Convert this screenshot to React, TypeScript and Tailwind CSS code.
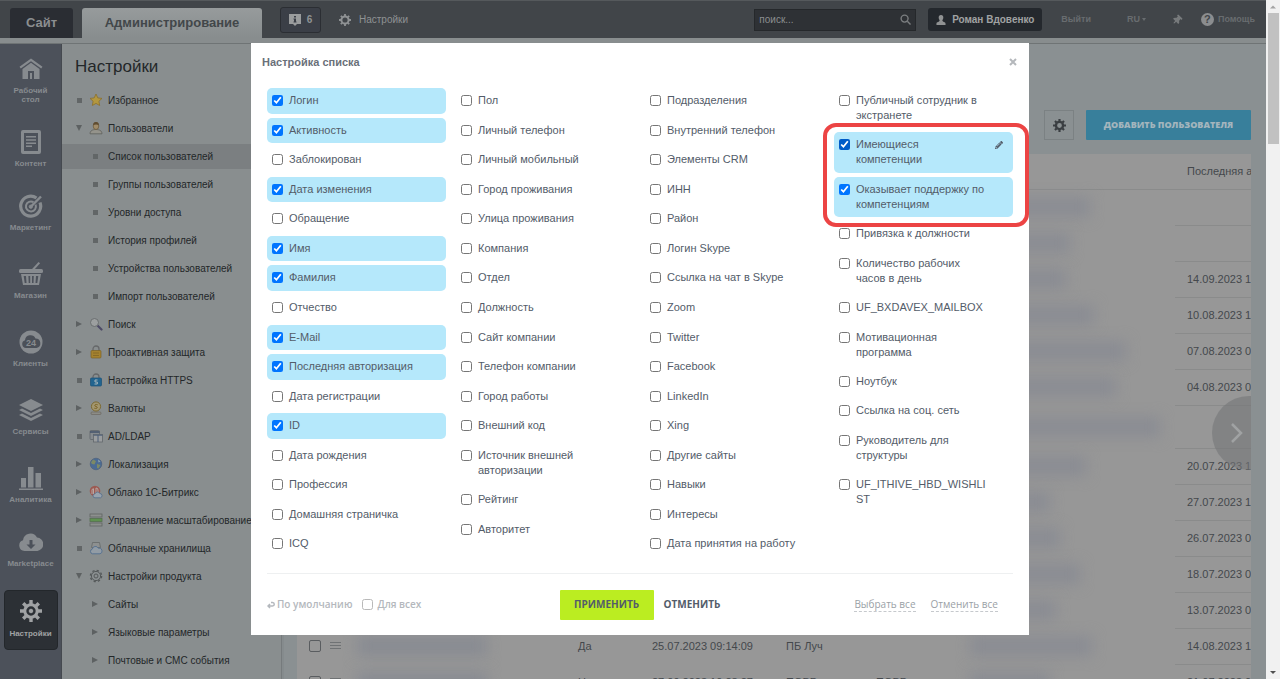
import React, { useState } from "react";
import { FaCog, FaPencilAlt, FaThumbtack } from "react-icons/fa";

type Field = {
  label: string;
  checked?: boolean;
  lines?: 2;
  hovered?: boolean;
};

type MenuItem = {
  label: string;
  marker: "dot" | "open" | "closed";
  icon?: React.ReactNode;
  sub?: boolean;
  active?: boolean;
};

type UserRow = {
  date: string;
  smudge: string;
  tall?: boolean;
  active?: string;
  changed?: string;
  company?: string;
  department?: string;
};

const fieldColumns: Field[][] = [
  [
    { label: "Логин", checked: true },
    { label: "Активность", checked: true },
    { label: "Заблокирован" },
    { label: "Дата изменения", checked: true },
    { label: "Обращение" },
    { label: "Имя", checked: true },
    { label: "Фамилия", checked: true },
    { label: "Отчество" },
    { label: "E-Mail", checked: true },
    { label: "Последняя авторизация", checked: true },
    { label: "Дата регистрации" },
    { label: "ID", checked: true },
    { label: "Дата рождения" },
    { label: "Профессия" },
    { label: "Домашняя страничка" },
    { label: "ICQ" },
  ],
  [
    { label: "Пол" },
    { label: "Личный телефон" },
    { label: "Личный мобильный" },
    { label: "Город проживания" },
    { label: "Улица проживания" },
    { label: "Компания" },
    { label: "Отдел" },
    { label: "Должность" },
    { label: "Сайт компании" },
    { label: "Телефон компании" },
    { label: "Город работы" },
    { label: "Внешний код" },
    { label: "Источник внешней авторизации", lines: 2 },
    { label: "Рейтинг" },
    { label: "Авторитет" },
  ],
  [
    { label: "Подразделения" },
    { label: "Внутренний телефон" },
    { label: "Элементы CRM" },
    { label: "ИНН" },
    { label: "Район" },
    { label: "Логин Skype" },
    { label: "Ссылка на чат в Skype" },
    { label: "Zoom" },
    { label: "Twitter" },
    { label: "Facebook" },
    { label: "LinkedIn" },
    { label: "Xing" },
    { label: "Другие сайты" },
    { label: "Навыки" },
    { label: "Интересы" },
    { label: "Дата принятия на работу" },
  ],
  [
    { label: "Публичный сотрудник в экстранете", lines: 2 },
    { label: "Имеющиеся компетенции", lines: 2, checked: true, hovered: true },
    { label: "Оказывает поддержку по компетенциям", lines: 2, checked: true },
    { label: "Привязка к должности" },
    { label: "Количество рабочих часов в день", lines: 2 },
    { label: "UF_BXDAVEX_MAILBOX" },
    { label: "Мотивационная программа", lines: 2 },
    { label: "Ноутбук" },
    { label: "Ссылка на соц. сеть" },
    { label: "Руководитель для структуры", lines: 2 },
    { label: "UF_ITHIVE_HBD_WISHLIST", lines: 2 },
  ],
];

const StarIcon = () => (
  <svg viewBox="0 0 14 14" className="size-[14px]">
    <path d="M7 1l1.8 3.9 4.2.5-3.1 2.900.8 4.200L7 10.400l-3.700 2.100.8-4.200L1 5.400l4.200-.5z" fill="#b3973f" stroke="#8a6f2c" strokeWidth=".8" />
  </svg>
);

const PersonIcon = () => (
  <svg viewBox="0 0 14 14" className="size-[14px]">
    <path d="M1 12.800c0-3 2.500-4.300 6-4.300s6 1.300 6 4.300z" fill="#94938b" stroke="#5e5f5c" strokeWidth=".8" />
    <ellipse cx="7" cy="5" rx="2.800" ry="3.500" fill="#a18c69" stroke="#6d5a3c" strokeWidth=".8" />
    <path d="M4.200 4.300a2.800 3.300 0 0 1 5.600 0c-1.500-1-4-1-5.600 0z" fill="#5f4c31" />
  </svg>
);

const LoupeIcon = () => (
  <svg viewBox="0 0 14 14" className="size-[14px]">
    <path d="M8.500 8.500l4 4" stroke="#4d4a66" strokeWidth="2.200" strokeLinecap="round" />
    <circle cx="5.500" cy="5.500" r="4" fill="#9c9fa0" stroke="#6b6f70" />
  </svg>
);

const LockIcon = () => (
  <svg viewBox="0 0 14 14" className="size-[14px]">
    <path d="M4 6V4a3 3 0 0 1 6 0v2" fill="none" stroke="#66686a" strokeWidth="1.300" />
    <rect x="2" y="5.500" width="10" height="7.500" rx="1" fill="#a5822f" stroke="#7d6225" strokeWidth=".7" />
    <path d="M4 8h6M4 10.500h6" stroke="#806427" strokeWidth=".8" />
  </svg>
);

const HttpsIcon = () => (
  <svg viewBox="0 0 14 14" className="size-[14px]">
    <path d="M4 6V4a3 3 0 0 1 6 0v2" fill="none" stroke="#66686a" strokeWidth="1.300" />
    <rect x="1.500" y="5" width="11" height="8" rx="1" fill="#22648f" stroke="#1a5279" strokeWidth=".7" />
    <path d="M8.500 7H6v2h2.300v2H5.500" fill="none" stroke="#a7b6bd" />
  </svg>
);

const CoinIcon = () => (
  <svg viewBox="0 0 14 14" className="size-[14px]">
    <rect x="2" y="11" width="10" height="2.500" rx="1" fill="#8c8c86" stroke="#66625a" strokeWidth=".6" />
    <circle cx="7" cy="5.500" r="4.600" fill="#a39770" stroke="#7d6a32" />
    <path d="M8.700 3.800c-3-1.200-4 1.200-1.700 1.700s1.300 2.800-1.700 1.700" fill="none" stroke="#7d6324" />
  </svg>
);

const LdapIcon = () => (
  <svg viewBox="0 0 14 14" className="size-[14px]">
    <rect x="1" y="1.500" width="9.500" height="9" rx="1" fill="#868b8f" stroke="#5f656b" strokeWidth=".8" />
    <path d="M1 3h9.500" stroke="#46566c" strokeWidth="1.600" />
    <rect x="4.500" y="5.500" width="9" height="7.500" fill="#9a9d9f" stroke="#63686c" strokeWidth=".8" />
    <path d="M4.500 6.200h9M9 6v7" stroke="#4c5e78" />
  </svg>
);

const GlobeIcon = () => (
  <svg viewBox="0 0 14 14" className="size-[14px]">
    <circle cx="7" cy="7" r="5.800" fill="#4b6b93" stroke="#465a78" strokeWidth=".6" />
    <path d="M4 2.500l3 1.500-1.500 3.500L3 7l-1-1.500zM8 7l3.500 1-2 3.500L8 11z" fill="#7d8a65" />
    <path d="M9 2.500l2.500 2-2 1z" fill="#8ea0ad" />
  </svg>
);

const BitrixCloudIcon = () => (
  <svg viewBox="0 0 14 14" className="size-[14px]">
    <circle cx="6" cy="6" r="5.300" fill="#9c5a52" />
    <path d="M3 9V4.500l1.500-.8V9M7 8V3a2 2 0 0 1 2 2v3" fill="none" stroke="#b8a7a4" />
    <path d="M6 12.800a2 2 0 0 1 0-4 2.600 2.600 0 0 1 4.800-.3 2.200 2.200 0 0 1 .7 4.300z" fill="#98a3ae" stroke="#566f8b" strokeWidth=".8" />
  </svg>
);

const ServersIcon = () => (
  <svg viewBox="0 0 14 14" className="size-[14px]">
    <rect x="1" y="1" width="12" height="3" fill="#8d908e" stroke="#606462" strokeWidth=".8" />
    <rect x="1" y="5.500" width="12" height="3" fill="#5f9150" stroke="#55704e" strokeWidth=".8" />
    <rect x="1" y="10" width="12" height="3" fill="#8d908e" stroke="#606462" strokeWidth=".8" />
  </svg>
);

const StorageIcon = () => (
  <svg viewBox="0 0 14 14" className="size-[14px]">
    <path d="M3.500 1.500h7l1 5h-9z" fill="#8d9090" stroke="#646868" strokeWidth=".8" />
    <path d="M3.500 12.800a2.400 2.400 0 0 1-.2-4.700 3.200 3.200 0 0 1 6-.9 2.900 2.900 0 0 1 1.700 5.600z" fill="#929ca5" stroke="#546f90" strokeWidth=".9" />
  </svg>
);

const GearLineIcon = () => (
  <svg viewBox="0 0 14 14" className="size-[14px]" fill="none" stroke="#55595a">
    <circle cx="7" cy="7" r="5.600" strokeWidth="1.400" strokeDasharray="2.200 2.200" />
    <circle cx="7" cy="7" r="4.600" />
    <circle cx="7" cy="7" r="2" />
  </svg>
);

const menu: MenuItem[] = [
  { label: "Избранное", marker: "dot", icon: <StarIcon /> },
  { label: "Пользователи", marker: "open", icon: <PersonIcon /> },
  { label: "Список пользователей", marker: "dot", sub: true, active: true },
  { label: "Группы пользователей", marker: "dot", sub: true },
  { label: "Уровни доступа", marker: "dot", sub: true },
  { label: "История профилей", marker: "dot", sub: true },
  { label: "Устройства пользователей", marker: "dot", sub: true },
  { label: "Импорт пользователей", marker: "dot", sub: true },
  { label: "Поиск", marker: "closed", icon: <LoupeIcon /> },
  { label: "Проактивная защита", marker: "closed", icon: <LockIcon /> },
  { label: "Настройка HTTPS", marker: "dot", icon: <HttpsIcon /> },
  { label: "Валюты", marker: "closed", icon: <CoinIcon /> },
  { label: "AD/LDAP", marker: "dot", icon: <LdapIcon /> },
  { label: "Локализация", marker: "closed", icon: <GlobeIcon /> },
  { label: "Облако 1С-Битрикс", marker: "closed", icon: <BitrixCloudIcon /> },
  { label: "Управление масштабирование", marker: "closed", icon: <ServersIcon /> },
  { label: "Облачные хранилища", marker: "dot", icon: <StorageIcon /> },
  { label: "Настройки продукта", marker: "open", icon: <GearLineIcon /> },
  { label: "Сайты", marker: "closed", sub: true },
  { label: "Языковые параметры", marker: "closed", sub: true },
  { label: "Почтовые и СМС события", marker: "closed", sub: true },
];

const rows: UserRow[] = [
  { date: "", smudge: "w-[120px]" },
  { date: "", smudge: "w-[100px]" },
  { date: "14.09.2023 1", smudge: "w-[96px]" },
  { date: "10.08.2023 1", smudge: "w-[124px]" },
  { date: "07.08.2023 0", smudge: "w-[156px]" },
  { date: "04.08.2023 0", smudge: "w-[146px]" },
  { date: "", smudge: "w-[190px]", tall: true },
  { date: "20.07.2023 1", smudge: "w-[116px]" },
  { date: "27.07.2023 1", smudge: "w-[80px]" },
  { date: "26.07.2023 0", smudge: "w-[90px]" },
  { date: "18.07.2023 0", smudge: "w-[110px]" },
  { date: "13.07.2023 0", smudge: "w-[86px]" },
  { date: "14.08.2023 1", smudge: "w-[122px]", active: "Да", changed: "25.07.2023 09:14:09", company: "ПБ Луч" },
  { date: "21.07.2023 0", smudge: "w-[80px]", active: "Нет", changed: "27.09.2023 10:28:27", company: "ПОВР", department: "ПОВР" },
];

const rail = [
  {
    label: "Рабочий стол",
    icon: (
      <path fillRule="evenodd" d="M12 1.500l11.500 8.300-1.300 1.800L12 4.300 1.800 11.600.5 9.800zM12 5.800l8.500 6.100V22h-17V11.900zM9 14v8h2v-6h2v6h2v-8z" />
    ),
  },
  {
    label: "Контент",
    icon: (
      <path fillRule="evenodd" d="M4 0h16a2 2 0 0 1 2 2v20a2 2 0 0 1-2 2H4a2 2 0 0 1-2-2V2a2 2 0 0 1 2-2zm1 3v18h14V3zm2 3h10v1.500H7zm0 3.200h10v1.500H7zm0 3.200h10v1.500H7zm0 3.200h6v1.500H7z" />
    ),
  },
  {
    label: "Маркетинг",
    icon: (
      <g fill="none" stroke="currentColor">
        <path d="M17.500 4A10 10 0 1 0 21 8.500" strokeWidth="3.200" />
        <path d="M14.500 8.200a5 5 0 1 0 2.100 2.500" strokeWidth="2" />
        <circle cx="11.800" cy="12.700" r="1.600" fill="currentColor" />
        <path d="M12 12.500L22 2.500" strokeWidth="2.400" />
      </g>
    ),
  },
  {
    label: "Магазин",
    tall: true,
    icon: (
      <g>
        <path d="M19.500 0l1.600 1.200-6.500 7.300-2-1z" />
        <rect x="0" y="7" width="24" height="4" rx="1.500" />
        <path fillRule="evenodd" d="M2 12h20l-2 11H4zm2.700 2l1 7h1.800l-.5-7zm4.700 0l.3 7h1.500v-7zm3.600 0v7h1.500l.3-7zm4 0l-.5 7h1.800l1-7z" />
      </g>
    ),
  },
  {
    label: "Клиенты",
    tall: true,
    icon: (
      <g>
        <circle cx="12" cy="12" r="11.500" />
        <path d="M7 18a4 4 0 0 1-1-7.800 5.500 5.500 0 0 1 10.500-1.700 4.800 4.800 0 0 1 1 9.500z" fill="#4b5058" />
        <text x="12" y="16" fontSize="9" fontWeight="700" textAnchor="middle">24</text>
      </g>
    ),
  },
  {
    label: "Сервисы",
    tall: true,
    icon: (
      <g>
        <path d="M12 1l12 6-12 6L0 7z" />
        <path d="M3 10.500l9 4.500 9-4.500 3 1.500-12 6-12-6z" />
        <path d="M3 15.500l9 4.500 9-4.500 3 1.500-12 6-12-6z" />
      </g>
    ),
  },
  {
    label: "Аналитика",
    tall: true,
    icon: <path d="M2 12h5v9.500H2zM9 1h5.500v20.500H9zM16.500 7H22v14.500h-5.500zM0 22.500h24V24H0z" />,
  },
  {
    label: "Marketplace",
    icon: (
      <path fillRule="evenodd" d="M5.500 21A5.500 5.500 0 0 1 4 10.300 7.500 7.500 0 0 1 18 7.500 6.800 6.800 0 0 1 18.500 21zM10.500 10v4.500H7.500L12 19l4.500-4.500h-3V10z" />
    ),
  },
];

const Marker: React.FC<{ kind: MenuItem["marker"] }> = ({ kind }) => {
  if (kind === "dot") return <span className="size-[5px] bg-[#626667]" />;
  return (
    <svg viewBox="0 0 6 6" className="size-[6px] fill-[#5d6162]">
      <path d={kind === "open" ? "M0 0h6L3 6z" : "M0 0l6 3-6 3z"} />
    </svg>
  );
};

const Header = () => (
  <header className="flex h-[38px] shrink-0 items-center border-t border-[#55595c] bg-[#414549] text-[10px] font-bold text-[#8f9294]">
    <nav className="flex gap-[9px] self-end pl-[10px] text-[13px]">
      <a href="#site" className="flex h-[30px] w-[63px] items-center justify-center rounded-t-[3px] bg-[#2a2d33] text-[#8b8e90]">
        Сайт
      </a>
      <a href="#admin" className="flex h-[30px] w-[180px] items-center justify-center rounded-t-[3px] bg-linear-to-b from-[#979b9c] to-[#888d8e] text-[#42474a]">
        Администрирование
      </a>
    </nav>
    <button className="ml-[18px] flex h-[26px] w-[41px] items-center justify-center gap-[6px] rounded-[3px] border border-[#2b2e33] bg-[#3b3f47]">
      <svg viewBox="0 0 12 12" className="size-[12px] fill-[#9a9c9d]">
        <path fillRule="evenodd" d="M0 0h12v10H8l-2 2-2-2H0zM5 2v1.500h2V2zM4.500 4.500v1H5v2h-.5v1h3v-1H7v-3z" />
      </svg>
      6
    </button>
    <a href="#settings" className="ml-[18px] flex items-center gap-2 font-normal">
      <svg viewBox="0 0 12 12" className="size-[12px]" fill="none" stroke="currentColor">
        <circle cx="6" cy="6" r="3.600" strokeWidth="2" />
        <path d="M6 0v2M6 10v2M0 6h2M10 6h2M1.800 1.800l1.400 1.400M8.800 8.800l1.400 1.400M1.800 10.200l1.400-1.400M8.800 3.200l1.400-1.400" strokeWidth="1.800" />
      </svg>
      Настройки
    </a>
    <div className="ml-auto flex h-[22px] w-[162px] items-center border border-[#25282b] bg-[#2e3135] px-1">
      <input aria-label="Поиск" placeholder="поиск..." className="min-w-0 flex-1 bg-transparent text-[10px] font-normal outline-none placeholder:text-[#8b8e90]" />
      <svg viewBox="0 0 12 12" className="size-[11px]" fill="none" stroke="#7b7e80" strokeWidth="1.500">
        <circle cx="5" cy="5" r="3.800" />
        <path d="M8 8l3.500 3.500" />
      </svg>
    </div>
    <button className="ml-3 flex h-[23px] w-[114px] items-center justify-center gap-[6px] rounded-[3px] bg-[#24282d] text-[#a0a2a3]">
      <svg viewBox="0 0 10 11" className="size-[10px] fill-[#909293]">
        <path d="M5 0a2.500 2.500 0 0 1 2.500 3c0 1.500-.8 2.200-1 3 0 1.500 3.500 1.500 3.500 3.500V11H0V9.500C0 7.500 3.500 7.500 3.500 6c-.2-.8-1-1.500-1-3A2.500 2.500 0 0 1 5 0z" />
      </svg>
      Роман Вдовенко
    </button>
    <a href="#logout" className="ml-[19px] text-[9px] text-[#686c6f]">Выйти</a>
    <button className="ml-[36px] flex items-center gap-[2px] text-[9px] text-[#686c6f]">
      RU
      <span className="border-x-2 border-t-[3px] border-x-transparent border-t-[#686c6f]" />
    </button>
    <FaThumbtack className="ml-[26px] size-[10px] rotate-45 text-[#777a7c]" />
    <a href="#help" className="mr-[11px] ml-[19px] flex items-center gap-1 text-[9px] text-[#686c6f]">
      <span className="flex size-[13px] items-center justify-center rounded-full bg-[#8b8d8f] text-[11px] text-[#414549]">?</span>
      Помощь
    </a>
  </header>
);

const Rail = () => (
  <nav className="flex w-[62px] shrink-0 flex-col items-center border-r border-[#45494f] bg-[#4c515a] text-[8px] leading-[9px] font-bold text-[#878b8f]">
    {rail.map((item) => (
      <a
        key={item.label}
        href="#section"
        className={`flex w-full flex-col items-center justify-end gap-[5px] pb-1 text-center ${item.tall ? "h-[68px]" : "h-16"}`}
      >
        <svg viewBox="0 0 24 24" className="size-[24px] fill-current">
          {item.icon}
        </svg>
        <span className="px-1">
          {item.label === "Рабочий стол" ? <>Рабочий<br />стол</> : item.label}
        </span>
      </a>
    ))}
    <a href="#settings" className="mt-[18px] flex h-[60px] w-[54px] flex-col items-center rounded-[4px] border border-[#23272b] bg-[#2c3035] pt-2 text-[#a0a2a4]">
      <svg viewBox="0 0 24 24" className="mb-[6px] size-[24px]" fill="none" stroke="currentColor">
        <circle cx="12" cy="12" r="6.200" strokeWidth="3" />
        <circle cx="12" cy="12" r="1.800" fill="currentColor" />
        <path d="M12 1v4M12 19v4M1 12h4M19 12h4M4.200 4.200L7 7M17 17l2.800 2.800M4.200 19.800L7 17M17 7l2.800-2.800" strokeWidth="3.400" />
      </svg>
      Настройки
    </a>
  </nav>
);

const Sidebar = () => (
  <aside className="w-[220px] shrink-0 overflow-hidden border-r border-[#767b7d] bg-[#898e8f] text-[#232729]">
    <h1 className="h-[42px] pt-[9px] pl-[13px] text-[17px] leading-7">Настройки</h1>
    <ul className="text-[10px]">
      {menu.map((item) => (
        <li key={item.label} className="flex h-7 items-center">
          <a
            href="#menu"
            className={`flex h-[25px] w-full items-center whitespace-nowrap ${item.active ? "bg-[#7b7f81]" : ""}`}
          >
            <span className={`flex justify-center ${item.sub ? "mr-1 ml-[24px] w-[18px]" : "ml-[8px] w-[18px]"}`}>
              <Marker kind={item.marker} />
            </span>
            {!item.sub && <span className="mr-[5px] ml-[1px]">{item.icon}</span>}
            {item.label}
          </a>
        </li>
      ))}
    </ul>
  </aside>
);

const UsersTable = () => (
  <table className="w-full table-fixed border-collapse bg-[#979797] text-left text-[11px] whitespace-nowrap text-[#44484c]">
    <colgroup>
      <col className="w-[30px]" />
      <col className="w-[30px]" />
      <col className="w-[221px]" />
      <col className="w-[74px]" />
      <col className="w-[134px]" />
      <col className="w-[90px]" />
      <col className="w-[94px]" />
      <col />
      <col className="w-[76px]" />
    </colgroup>
    <thead>
      <tr className="h-[35px] border-b border-[#8a8b8b]">
        <th colSpan={8} />
        <th className="pl-3 font-normal">Последняя а</th>
      </tr>
    </thead>
    <tbody>
      {rows.map((row, i) => (
        <tr key={i} className={row.tall ? "h-[43px]" : "h-9"}>
          <td className="pl-3 align-middle">
            <input
              type="checkbox"
              aria-label="Выбрать строку"
              className="block size-[12px] appearance-none rounded-[2px] border border-[#5a5d60] checked:bg-[#5a5d60]"
            />
          </td>
          <td>
            <svg viewBox="0 0 11 9" className="ml-[3px] h-[9px] w-[11px] stroke-[#6f7274]">
              <path d="M0 .5h11M0 3.500h11M0 6.500h11" />
            </svg>
          </td>
          <td>
            <div className="h-5 w-[130px] bg-[#888b92] blur-[7px]" />
          </td>
          <td>{row.active}</td>
          <td>{row.changed}</td>
          <td>{row.company}</td>
          <td>{row.department}</td>
          <td>
            <div className={`h-5 bg-[#8a8c93] blur-[7px] ${row.smudge}`} />
          </td>
          <td className="border-b border-[#8a8b8b] pl-3">{row.date}</td>
        </tr>
      ))}
    </tbody>
  </table>
);

const Content = () => (
  <main className="min-w-0 flex-1 overflow-hidden border-l-2 border-[#858b8d] bg-[#8a9092] pt-[66px] pr-[15px] pl-[13px]">
    <div className="mb-[14px] flex h-[30px] justify-end gap-3">
      <button aria-label="Настройки" className="flex w-[30px] items-center justify-center border border-[#7b8183] text-[#3a3e42]">
        <svg viewBox="0 0 12 12" className="size-[13px]" fill="none" stroke="currentColor">
          <circle cx="6" cy="6" r="3.300" strokeWidth="2.200" />
          <path d="M6 0v2M6 10v2M0 6h2M10 6h2M1.800 1.800l1.400 1.400M8.800 8.800l1.400 1.400M1.800 10.200l1.400-1.400M8.800 3.200l1.400-1.400" strokeWidth="2" />
        </svg>
      </button>
      <button className="w-[165px] rounded-[1px] bg-[#387f9b] font-['Open_Sans',sans-serif] text-[9px] font-extrabold text-[#a3b5bd]">
        ДОБАВИТЬ ПОЛЬЗОВАТЕЛЯ
      </button>
    </div>
    <div className="relative overflow-hidden">
      <UsersTable />
      <div className="absolute top-[242px] -right-[35px] flex size-[74px] items-center rounded-full bg-[#747678]/60 pl-[14px]">
        <svg viewBox="0 0 20 20" className="size-[20px]" fill="none" stroke="#a0a2a3" strokeWidth="2.500">
          <path d="M6 1l9 9-9 9" />
        </svg>
      </div>
    </div>
  </main>
);

const Scrollbar = () => (
  <div className="flex w-[14px] shrink-0 flex-col items-center bg-[#f1f1f1]">
    <svg viewBox="0 0 14 13" className="h-[13px] w-[14px] fill-[#a3a3a3]">
      <path d="M4 8.500h6l-3-3z" />
    </svg>
    <div className="h-[131px] w-[11px] bg-[#c1c1c1]" />
    <svg viewBox="0 0 14 13" className="mt-auto h-[13px] w-[14px] fill-[#505050]">
      <path d="M4 5h6l-3 3z" />
    </svg>
  </div>
);

const FieldOption: React.FC<{ field: Field }> = ({ field }) => {
  const [checked, setChecked] = useState(!!field.checked);

  return (
    <label
      className={`my-[2px] flex items-start gap-[6px] rounded-[5px] pt-[5px] pl-[5px] leading-[15px] ${
        field.lines ? "row-span-3" : "row-span-2"
      } ${checked ? "bg-[#b5e8fb]" : ""} ${field.hovered ? "pr-[10px]" : "pr-[25px]"}`}
    >
      <input
        type="checkbox"
        checked={checked}
        onChange={(e) => setChecked(e.target.checked)}
        className={`mt-[2px] size-[11px] shrink-0 ${field.hovered ? "accent-[#005cc8]" : "accent-[#0075ff]"}`}
      />
      <span className="min-w-0 flex-1 break-words">{field.label}</span>
      {field.hovered && <FaPencilAlt className="mt-[4px] ml-1 size-[8px] shrink-0" />}
    </label>
  );
};

const ListSettingsDialog = () => (
  <div role="dialog" aria-label="Настройка списка" className="w-[778px] max-w-full bg-white text-[#535c69]">
    <div className="mb-[5px] flex h-[38px] items-center justify-between pr-3 pl-[11px]">
      <h2 className="text-[11px] font-bold text-[#6a7079]">Настройка списка</h2>
      <button aria-label="Закрыть">
        <svg viewBox="0 0 8 8" className="size-[8px]" stroke="#b5b8bc" strokeWidth="2">
          <path d="M1 1l6 6M7 1L1 7" />
        </svg>
      </button>
    </div>

    <div className="mx-4 grid grid-cols-4 gap-[10px] border-b border-[#eef0f1] pb-[14px] text-[11px]">
      {fieldColumns.map((column, i) => (
        <div key={i} className="relative grid h-[473px] grid-cols-1 grid-rows-[repeat(32,minmax(0,1fr))]">
          {column.map((field) => (
            <FieldOption key={field.label} field={field} />
          ))}
          {i === 3 && (
            <div className="pointer-events-none absolute top-[37px] -right-4 -left-[11px] h-[104px] rounded-[13px] border-4 border-[#ec4444]" />
          )}
        </div>
      ))}
    </div>

    <div className="mx-4 grid h-[61px] grid-cols-[1fr_auto_1fr] items-center font-['Open_Sans',sans-serif] text-[10px]">
      <div className="flex items-center gap-[10px] font-semibold text-[#b4b8bd]">
        <button className="flex items-center gap-[2px]">
          <svg viewBox="0 0 8 8" className="size-[8px]" fill="none" stroke="currentColor" strokeWidth="1.500">
            <path d="M3 3L1 5l2 2M1 5h4.500a1.700 1.700 0 0 0 0-3.500H4" />
          </svg>
          По умолчанию
        </button>
        <label className="flex items-center gap-1">
          <input type="checkbox" className="size-[11px] opacity-50" />
          Для всех
        </label>
      </div>
      <div className="flex items-center gap-[10px] font-bold">
        <button className="h-[30px] w-[94px] rounded-[1px] bg-[#bbed21]">ПРИМЕНИТЬ</button>
        <button>ОТМЕНИТЬ</button>
      </div>
      <div className="flex justify-end gap-[15px] pr-[15px] text-[#9a9fa6]">
        <button className="border-b border-dashed border-[#c6c9cd] leading-[14px]">Выбрать все</button>
        <button className="border-b border-dashed border-[#c6c9cd] leading-[14px]">Отменить все</button>
      </div>
    </div>
  </div>
);

const App = () => (
  <div className="flex h-screen overflow-hidden font-['Liberation_Sans',Arial,sans-serif]">
    <div className="flex min-w-0 flex-1 flex-col">
      <Header />
      <div className="h-[6px] shrink-0 border-b border-[#6f7475] bg-[#888d8e]" />
      <div className="flex min-h-0 flex-1">
        <Rail />
        <Sidebar />
        <Content />
      </div>
    </div>
    <Scrollbar />

    <div className="fixed inset-0 flex items-start justify-center pt-[43px]">
      <ListSettingsDialog />
    </div>
  </div>
);

export default App;
